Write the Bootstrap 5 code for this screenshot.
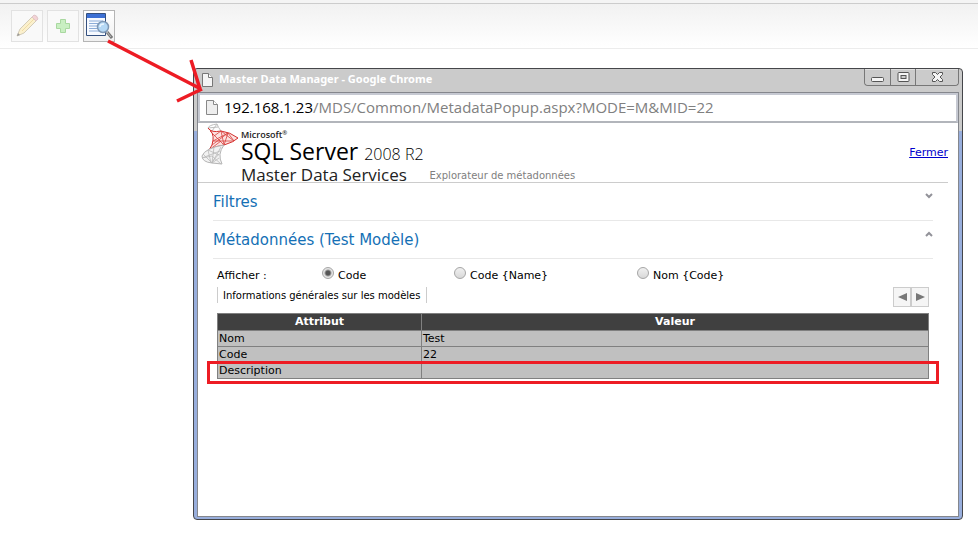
<!DOCTYPE html>
<html lang="fr">
<head>
<meta charset="utf-8">
<meta name="viewport" content="width=device-width, initial-scale=1">
<title>Master Data Manager</title>
<link href="https://cdn.jsdelivr.net/npm/bootstrap@5.3.0/dist/css/bootstrap.min.css" rel="stylesheet">
<style>
body { font-family: "DejaVu Sans", sans-serif; font-size: 11px; line-height: 16px; color: #000; background: #fff; }
.toolbar { border-top: 3px solid #f4f4f4; border-bottom: 1px solid #ececec; background: linear-gradient(#f1f1f1, #fff); box-shadow: inset 0 1px #ccc; padding: 7px 11px 6px; gap: 4px; }
.tool { width: 32px; height: 32px; padding: 0; border: 1px solid #b5b5b5; background: linear-gradient(#fff, #f0f0f0); }
.tool:disabled { border-color: #e2e2e2; background: #f9f9f9; }
svg { display: block; flex: none; }
.tool svg, .title-buttons svg, .pager svg { margin: auto; }
.popup { margin: 19px 15px 14px 193px; border: 1px solid #45464a; border-radius: 4px; background: linear-gradient(#cbcbcb 62px, #98aedc 62px); padding: 0 3px 2px; }
.title-bar { height: 23px; padding-left: 5px; gap: 6px; color: #fff; font: bold 11px/20px "Noto Sans", sans-serif; }
.title-buttons { border: 1px solid #777; border-top: 0; border-radius: 0 0 4px 4px; height: 17px; }
.title-buttons button { border: 0; border-left: 1px solid #777; background: #cbcbcb; padding: 0; width: 25px; height: 16px; box-shadow: inset 0 1px #e0e0e0; }
.title-buttons button:first-child { border-left: 0; border-radius: 0 0 0 4px; }
.title-buttons button:last-child { width: 43px; border-radius: 0 0 4px 0; }
.pane { border: 1px solid #85878d; background: #fff; }
.address { height: 30px; border: 2px solid #c6c9d2; border-bottom-color: #b2b5bb; padding: 0 0 2px 6px; gap: 6px; font: 15px/24px "Open Sans", sans-serif; color: #808080; }
.address b { font-weight: 400; color: #000; }
.page-body { min-height: 393px; padding-right: 10px; }
.brand-row { height: 60px; border-bottom: 1px solid #ccc; padding-left: 2px; }
.brand-text { font-family: "Open Sans", sans-serif; color: #222; padding: 6px 0 0 2px; white-space: nowrap; }
.brand-ms { font-size: 9px; line-height: 12px; font-weight: 600; }
.brand-ms sup { font-size: 6px; }
.brand-sql { font-size: 23px; line-height: 20px; color: #000; }
.brand-sql span { font-size: 16px; font-weight: 300; }
.brand-mds { font-size: 17px; line-height: 22px; }
.crumb { font-size: 10px; line-height: 12px; color: #808080; margin-left: 6px; }
.close-link { color: #00c; margin-top: 22px; }
.sections { padding: 0 15px; }
.section-head { height: 38px; border-bottom: 1px solid #e8e8e8; font-size: 15px; line-height: 20px; color: #1570b5; font-weight: 400; margin: 0; padding-top: 9px; }
.section-head button { border: 0; background: none; padding: 0; height: 8px; }
.details { padding: 8px 4px 0; }
.options { height: 20px; }
.options label { padding-top: 1px; }
.options input { width: 12px; height: 12px; margin: 0 4px 0 0; appearance: none; border: 1px solid #a5a5a5; border-radius: 50%; background: linear-gradient(#f0f0f0, #d8d8d8); }
.options input:checked { background: radial-gradient(circle, #555 2px, #e4e4e4 4px); }
.opt-title { width: 105px; padding-top: 1px; }
.opt-a { width: 132px; }
.opt-b { width: 183px; }
.tab-row { height: 26px; }
.tab-label { border: 0; border-left: 1px solid #ccc; border-right: 1px solid #ccc; background: none; font-size: 10px; line-height: 16px; padding: 2px 6px 0 5px; height: 16px; line-height: 14px; }
.pager button { width: 18px; height: 20px; border: 1px solid #ccc; background: #f5f5f5; padding: 0; }
.meta-table { width: 100%; border-collapse: collapse; table-layout: fixed; background: #c0c0c0; }
.meta-table th, .meta-table td { border: 1px solid #808080; padding: 0 1px; line-height: 15px; height: 16px; }
.meta-table th { background: #404040; text-align: center; color: #fff; line-height: 16px; }
.meta-table th:first-child { width: 204px; }
.highlight { position: absolute; left: -10px; right: -10px; bottom: -5px; height: 23px; border: 3px solid #ed1c24; pointer-events: none; }
.pointer { position: absolute; left: 100px; top: 32px; pointer-events: none; }
</style>
</head>
<body class="position-relative">
<header class="toolbar d-flex" role="toolbar" aria-label="Outils">
  <button class="tool" disabled aria-label="Modifier"><svg width="24" height="24" viewBox="0 0 24 24"><path d="M2 22l3-7L17 3l4 4L9 19z" fill="#fbf0cd" stroke="#d3ccb8"/><path d="M7 17L19 5" stroke="#f0dca4"/><path d="M17 3l2-2q3 0 4 4l-2 2z" fill="#f3d3d6" stroke="#dfc6c8"/><path d="M2 22l1-3 2 2z" fill="#999"/></svg></button>
  <button class="tool" disabled aria-label="Ajouter"><svg width="24" height="24" viewBox="0 0 24 24"><path d="M9.500 5.500h5v4h4v5h-4v4h-5v-4h-4v-5h4z" fill="#c9efc2" stroke="#a9d8a0"/></svg></button>
  <button class="tool" aria-label="Explorer les métadonnées"><svg width="28" height="28" viewBox="0 0 28 28"><path d="M1.500 1.500h19v22h-19z" fill="#f7faff" stroke="#34507f"/><path d="M2 2h18v4H2z" fill="#3d70d4"/><path d="M4 9h14M4 11.500h14M4 14h11M4 16.500h11M4 19h14" stroke="#8cacd8"/><path d="M22 20l5 6" stroke="#777" stroke-width="3"/><path d="M22 20l4 5" stroke="#bbb"/><circle cx="18" cy="15" r="5.500" fill="#b5d8f5" stroke="#7f98b5" stroke-width="1.500"/><path d="M15 15q0-3 4-3" fill="none" stroke="#eaf6ff" stroke-width="1.500"/></svg></button>
</header>

<main class="popup">
  <div class="title-bar d-flex">
    <svg class="mt-1" width="11" height="14" viewBox="0 0 11 14"><path d="M.5.5h6l4 4v9H.5z" fill="#f4f4f4" stroke="#777"/><path d="M6.500.5v4h4" fill="#fff" stroke="#777"/></svg>
    <span class="flex-grow-1">Master Data Manager - Google Chrome</span>
    <div class="title-buttons d-flex">
      <button aria-label="Réduire"><svg width="13" height="14" viewBox="0 0 13 14"><rect x=".5" y="7.500" width="12" height="4" rx="1" fill="#f5f5f5" stroke="#555"/></svg></button>
      <button aria-label="Agrandir"><svg width="13" height="14" viewBox="0 0 13 14"><rect x="1" y="2.500" width="11" height="9" rx="1" fill="#f5f5f5" stroke="#555"/><rect x="4" y="5.500" width="5" height="3" fill="#ccc" stroke="#555"/></svg></button>
      <button aria-label="Fermer la fenêtre"><svg width="13" height="14" viewBox="0 0 13 14"><path d="M1.500 2.500h3l2 2 2-2h3v2l-2.500 2.500 2.500 2.500v2h-3l-2-2-2 2h-3v-2L4 7 1.500 4.500z" fill="#f5f5f5" stroke="#555"/></svg></button>
    </div>
  </div>
  <div class="pane">
    <div class="address d-flex align-items-center">
      <svg width="12" height="15" viewBox="0 0 12 15"><path d="M.5.5h7l4 4v10H.5z" fill="#eee" stroke="#888"/><path d="M7.500.5v4h4" fill="#fff" stroke="#888"/></svg>
      <span><b>192.168.1.23</b>/MDS/Common/MetadataPopup.aspx?MODE=M&amp;MID=22</span>
    </div>
    <div class="page-body">
      <div class="brand-row d-flex">
        <svg width="39" height="44" viewBox="0 0 39 44" fill="none">
          <path d="M8 5q1-3 9-4 1 3 4 7M8 5l10-1M12 8l5-7" stroke="#bdbdbd"/>
          <path d="M8 5q3 5 13 3 9 1 17 7-4 4-14 7-9 1-15 5 4-5 4-10 1-7-5-12z" fill="#fbe3e1" stroke="#d5302e"/>
          <path d="M10 8l14 14M14 13l7-5 3 14 4-12 6 8M13 18l15-8M13 18l21 0M21 8l13 10M12 22l16-12M9 27l12-9" stroke="#d9403d" stroke-width=".8"/>
          <path d="M24 22Q5 25 2 33q0 6 10 7l10 1q-5-10 2-19z" fill="#f2f2f2" stroke="#b4b4b4"/>
          <path d="M2 35l18-7M8 27l3 13 8-9M8 27l11 5M3 31l9 9 9-16M14 24l-2 16M19 35l-7 5M2 35l10-2 9 8" stroke="#b9b9b9" stroke-width=".8"/>
        </svg>
        <div class="brand-text">
          <div class="brand-ms">Microsoft<sup>®</sup></div>
          <div class="brand-sql">SQL Server <span>2008 R2</span></div>
          <div class="brand-mds">Master Data Services</div>
        </div>
        <span class="crumb align-self-end">Explorateur de métadonnées</span>
        <a class="close-link ms-auto align-self-start" href="#">Fermer</a>
      </div>
      <div class="sections">
        <h2 class="section-head d-flex justify-content-between align-items-start">Filtres
          <button aria-label="Développer"><svg width="8" height="6" viewBox="0 0 8 6"><path d="M1 1l3 3 3-3" fill="none" stroke="#929299" stroke-width="2"/></svg></button></h2>
        <h2 class="section-head d-flex justify-content-between align-items-start">Métadonnées (Test Modèle)
          <button aria-label="Réduire la section"><svg width="8" height="6" viewBox="0 0 8 6"><path d="M1 5l3-3 3 3" fill="none" stroke="#929299" stroke-width="2"/></svg></button></h2>
        <div class="details">
          <div class="options d-flex align-items-start" role="radiogroup" aria-labelledby="show">
            <span class="opt-title" id="show">Afficher :</span>
            <div class="opt-a d-flex align-items-start"><input type="radio" name="display" id="r1" checked><label for="r1">Code</label></div>
            <div class="opt-b d-flex align-items-start"><input type="radio" name="display" id="r2"><label for="r2">Code {Name}</label></div>
            <div class="d-flex align-items-start"><input type="radio" name="display" id="r3"><label for="r3">Nom {Code}</label></div>
          </div>
          <div class="tab-row d-flex align-items-start">
            <button class="tab-label">Informations générales sur les modèles</button>
            <div class="pager d-flex ms-auto">
              <button aria-label="Précédent"><svg width="9" height="8" viewBox="0 0 9 8"><path d="M9 0v8L0 4z" fill="#777"/></svg></button>
              <button aria-label="Suivant"><svg width="9" height="8" viewBox="0 0 9 8"><path d="M0 0v8l9-4z" fill="#777"/></svg></button>
            </div>
          </div>
          <div class="position-relative">
            <table class="meta-table">
              <thead><tr><th scope="col">Attribut</th><th scope="col">Valeur</th></tr></thead>
              <tbody>
                <tr><td>Nom</td><td>Test</td></tr>
                <tr><td>Code</td><td>22</td></tr>
                <tr><td>Description</td><td></td></tr>
              </tbody>
            </table>
            <div class="highlight"></div>
          </div>
        </div>
      </div>
    </div>
  </div>
</main>
<svg class="pointer" width="106" height="74" viewBox="0 0 106 74" fill="none" stroke="#ed1c24" stroke-width="3.500" aria-hidden="true"><path d="M8 9L101 57M91 28l9 29M77 69l25-12"/></svg>
<script src="https://cdn.jsdelivr.net/npm/bootstrap@5.3.0/dist/js/bootstrap.bundle.min.js"></script>
</body>
</html>
